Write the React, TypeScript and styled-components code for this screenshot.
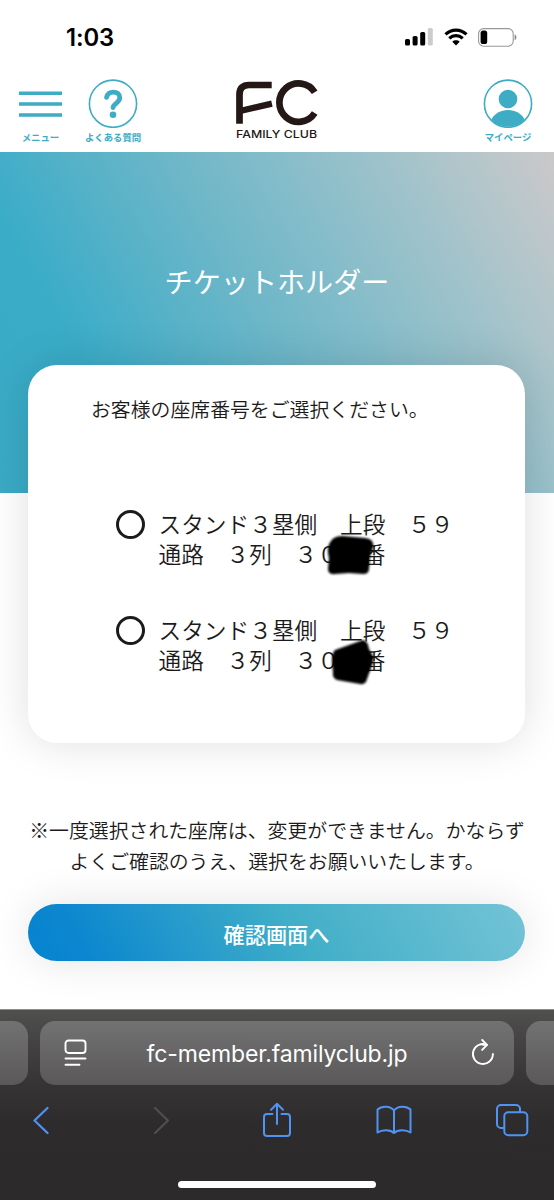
import React from "react";
import styled, { createGlobalStyle } from "styled-components";

const GlobalStyle = createGlobalStyle`
  *, *::before, *::after { box-sizing: border-box; }
  html, body { margin: 0; padding: 0; background: #fff; }
  body { font-family: "Noto Sans CJK JP", "Noto Sans", sans-serif; color: #1c1a1a; }
  button { font: inherit; border: 0; background: none; padding: 0; }
  svg { display: block; flex: none; }
`;

const Screen = styled.div`
  width: 554px;
  height: 1200px;
  overflow: hidden;
  display: flex;
  flex-direction: column;
  background: #fff;
`;

const StatusBar = styled.div`
  height: 74px;
  flex: none;
  display: flex;
  justify-content: space-between;
  align-items: center;
  padding: 0 37px 0 66px;
`;

const Clock = styled.span`
  padding-top: 1px;
  font: 600 23.8px/28px Inter, sans-serif;
  letter-spacing: -0.1px;
  color: #000;
`;

const StatusIcons = styled.div`
  display: flex;
  align-items: center;
  gap: 10.5px;
`;

const Header = styled.header`
  height: 78px;
  flex: none;
  display: grid;
  grid-template-columns: 1fr auto 1fr;
  align-items: start;
  padding: 4px 21px 0 19px;
`;

const NavGroup = styled.nav<{ $end?: boolean }>`
  display: flex;
  gap: 23px;
  justify-content: ${(p) => (p.$end ? "flex-end" : "flex-start")};
`;

const NavItem = styled.button<{ $width: number }>`
  width: ${(p) => p.$width}px;
  display: flex;
  flex-direction: column;
  align-items: center;
  gap: 3px;
  color: #3eacc4;
`;

const NavLabel = styled.span`
  font-size: 9.4px;
  line-height: 12px;
  font-weight: 700;
  white-space: nowrap;
`;

const Hero = styled.section`
  height: 341px;
  flex: none;
  display: flex;
  justify-content: center;
  padding-top: 107px;
  background: linear-gradient(60deg, #3aaac6 0%, #3aacc8 21%, #67b5c8 45%, #8fbfca 68%, #b4c6cb 88%, #cbc8c9 100%);
`;

const HeroTitle = styled.h1`
  margin: 0;
  font-size: 28.1px;
  line-height: 44px;
  font-weight: 400;
  color: #fff;
`;

const Card = styled.section`
  position: relative;
  width: 497px;
  height: 378px;
  flex: none;
  margin: -128px 0 0 28px;
  padding: 28px 62px 0 63px;
  border-radius: 29px;
  background: #fff;
  box-shadow: 0 0 44px rgba(0, 0, 0, 0.13);
`;

const Prompt = styled.p`
  margin: 0 0 69px;
  font-size: 19.88px;
  line-height: 31px;
  font-weight: 350;
  white-space: nowrap;
`;

const Option = styled.label`
  display: flex;
  gap: 14px;
  height: 76px;
  margin: 0 0 29.5px 24.5px;
  padding-top: 15.5px;
`;

const Radio = styled.span`
  width: 29px;
  height: 29px;
  margin-top: 1.5px;
  flex: none;
  border: 3px solid #1c1a1a;
  border-radius: 50%;
`;

const SeatText = styled.span`
  position: relative;
  padding-top: 0.5px;
  font-size: 22.7px;
  line-height: 30px;
  font-weight: 350;
  white-space: nowrap;
`;

const Scribble = styled.svg`
  position: absolute;
  left: 166px;
  top: 25px;
`;

const Notice = styled.p`
  flex: none;
  margin: 71px 0 0;
  font-size: 19.88px;
  line-height: 31px;
  font-weight: 350;
  text-align: center;
  white-space: nowrap;
`;

const Submit = styled.button`
  flex: none;
  width: 497px;
  height: 57px;
  margin: 28px 0 0 28px;
  padding-top: 2px;
  border-radius: 29px;
  font-size: 21.2px;
  line-height: 30px;
  font-weight: 500;
  color: #fff;
  background: linear-gradient(60deg, #0683d0 0%, #0c87cf 12%, #41afc8 54%, #74c3d6 100%);
  box-shadow: 0 0 44px rgba(0, 0, 0, 0.11);
`;

const Browser = styled.footer`
  position: relative;
  flex: none;
  height: 191px;
  margin-top: auto;
  border-top: 1px solid #8b8c8c;
  background: linear-gradient(#50504f 0, #434141 35px, #353334 76px, #2d2b2c 115px, #2c2a2b 100%);
`;

const TabStrip = styled.div`
  display: flex;
  gap: 12px;
  padding-top: 11px;
  height: 75px;
`;

const Tab = styled.div<{ $edge?: "left" | "right" }>`
  width: ${(p) => (p.$edge ? "28px" : "474px")};
  flex: none;
  display: flex;
  align-items: center;
  justify-content: space-between;
  padding: ${(p) => (p.$edge ? "0" : "0 20px 0 24px")};
  border-radius: ${(p) => (p.$edge === "left" ? "0 15px 15px 0" : p.$edge === "right" ? "15px 0 0 15px" : "15px")};
  background: linear-gradient(#737272, #5a5858);
  color: #fff;
`;

const Address = styled.span`
  margin-right: 4px;
  padding-top: 1px;
  font: 400 23px/30px Inter, sans-serif;
  letter-spacing: -0.15px;
`;

const Toolbar = styled.div`
  display: grid;
  grid-template-columns: repeat(5, 84px);
  column-gap: 33.4px;
  justify-items: center;
  align-items: center;
  height: 70px;
  color: #5093f2;
`;

const HomeIndicator = styled.div`
  width: 198px;
  height: 7px;
  margin: 26px auto 0;
  border-radius: 4px;
  background: #fff;
`;

const SignalIcon = () => (
  <svg width="28" height="18" viewBox="0 0 28 18">
    <rect x="0" y="11" width="5" height="6.5" rx="1.6" />
    <rect x="7.6" y="8" width="5" height="9.5" rx="1.6" />
    <rect x="15.2" y="4" width="5" height="13.5" rx="1.6" />
    <rect x="22.8" y="0" width="5" height="17.5" rx="1.6" fill="#ccc" />
  </svg>
);

const WifiIcon = () => (
  <svg width="24" height="18" viewBox="0 0 24 18" fill="none" stroke="#000" strokeWidth="3.2">
    <path d="M1.5 6.4C7.4.7 16.6.7 22.5 6.4" />
    <path d="M5.3 10.4c3.8-3.6 9.6-3.6 13.4 0" />
    <path d="M8.3 13.7c2-1.9 5.4-1.9 7.4 0L12 17.4Z" fill="#000" stroke="none" />
  </svg>
);

const BatteryIcon = () => (
  <svg width="39" height="19" viewBox="0 0 39 19">
    <rect x=".6" y=".6" width="34.6" height="17.6" rx="5" fill="none" stroke="#999" strokeWidth="1.1" />
    <rect x="2.6" y="2.6" width="6.6" height="13.4" rx="2.6" />
    <path d="M36.6 6.6c2.4.8 2.4 4.8 0 5.6Z" fill="#888" />
  </svg>
);

const MenuIcon = () => (
  <svg width="43" height="50" viewBox="0 0 43 50" stroke="currentColor" strokeWidth="3.6">
    <path d="M0 15.2h43M0 26h43M0 37h43" />
  </svg>
);

const FaqIcon = () => (
  <svg width="50" height="50" viewBox="0 0 50 50" fill="none" stroke="currentColor">
    <circle cx="25" cy="25.7" r="23.6" strokeWidth="1.6" />
    <path d="M18.600 19.300c.800-3.400 3.400-5.200 6.700-5.200 4 0 6.500 2.100 6.500 5.500 0 2.900-1.500 4.100-3.600 5.700-2.100 1.600-3.100 2.600-3.200 4.400" strokeWidth="4.800" strokeLinecap="round" />
    <circle cx="25" cy="36.700" r="3.300" fill="currentColor" stroke="none" />
  </svg>
);

const ProfileIcon = () => (
  <svg width="50" height="50" viewBox="0 0 50 50">
    <circle cx="25" cy="25.7" r="23.6" fill="none" stroke="currentColor" strokeWidth="1.6" />
    <circle cx="25" cy="21" r="9.3" fill="currentColor" />
    <path d="M8.2 41.8C11.5 35.4 17.6 32 25 32s13.500 3.400 16.800 9.800A23.700 23.700 0 0 1 8.200 41.800Z" fill="currentColor" />
  </svg>
);

const Logo = () => (
  <svg width="84" height="62" viewBox="0 0 84 62" fill="none" stroke="#231815">
    <path d="M5.500 45.800V16.500Q5.500 7 15 7H37.700" strokeWidth="6.700" />
    <path d="M6 33L37.900 25.600" strokeWidth="6.400" />
    <path d="M80.700 14.200A19.200 19.200 0 1 0 80.700 35" strokeWidth="6.700" />
    <text x="2" y="60" textLength="81" lengthAdjust="spacingAndGlyphs" fill="#231815" stroke="none" fontFamily="Inter, sans-serif" fontSize="10.400" fontWeight="500">
      FAMILY CLUB
    </text>
  </svg>
);

const PageIcon = () => (
  <svg width="23" height="28" viewBox="0 0 23 28" fill="none" stroke="currentColor" strokeWidth="1.900" strokeLinecap="round">
    <rect x="1.500" y="1.500" width="20" height="12.500" rx="3" />
    <path d="M1.500 19.500h20M1.500 25.700h14" />
  </svg>
);

const ReloadIcon = () => (
  <svg width="23" height="28" viewBox="0 0 23 28" fill="none" stroke="currentColor" strokeWidth="1.900" strokeLinecap="round" strokeLinejoin="round">
    <path d="M21.900 15A10 10 0 1 1 15.800 5.800H12" />
    <path d="M11.200 1l4.800 4.900-4.800 5" />
  </svg>
);

const BackIcon = () => (
  <svg width="18" height="28" viewBox="0 0 18 28" fill="none" stroke="currentColor" strokeWidth="2.200" strokeLinecap="round" strokeLinejoin="round">
    <path d="M14.500 2L1.500 14.500l13 12.500" />
  </svg>
);

const ForwardIcon = () => (
  <svg width="22" height="28" viewBox="0 0 22 28" fill="none" stroke="#504e4f" strokeWidth="2.200" strokeLinecap="round" strokeLinejoin="round">
    <path d="M7 2l13 12.500L7 27" />
  </svg>
);

const ShareIcon = () => (
  <svg width="30" height="36" viewBox="0 0 30 36" fill="none" stroke="currentColor" strokeWidth="2" strokeLinecap="round" strokeLinejoin="round">
    <path d="M10.500 12H5a3 3 0 0 0-3 3v16a3 3 0 0 0 3 3h20a3 3 0 0 0 3-3V15a3 3 0 0 0-3-3h-5.500" />
    <path d="M15 22V2M9 7.700l6-6 6 6" />
  </svg>
);

const BookIcon = () => (
  <svg width="36" height="32" viewBox="0 0 36 32" fill="none" stroke="currentColor" strokeWidth="2" strokeLinejoin="round">
    <path d="M18 6.500C14.500 1.600 5.500 1.600 1.500 5.500V28.500c4.500-3.200 13-3.200 16.500.500V6.500ZM18 6.500c3.500-4.900 12.500-4.900 16.500-1V28.500c-4.500-3.200-13-3.200-16.500.500Z" />
  </svg>
);

const TabsIcon = () => (
  <svg width="34" height="34" viewBox="0 0 34 34" fill="none" stroke="currentColor" strokeWidth="2">
    <path d="M9 25H6a4 4 0 0 1-4-4V6a4 4 0 0 1 4-4h15a4 4 0 0 1 4 4v3" />
    <rect x="9.300" y="9.300" width="23" height="23" rx="4" />
  </svg>
);

const seats = [
  "M6 7Q9 2 18 2L40 4Q50 5 48 14L45 22L44 35Q44 40 38 40L24 39L10 40Q3 41 3 35L4 24Q1 13 6 7Z",
  "M10 11L38 1Q43 2 44 10L48 17Q49 22 46 29L42 40Q41 46 35 45L12 41Q7 39 8 33L7 22Q7 14 10 11Z",
];

export default function App() {
  return (
    <Screen>
      <GlobalStyle />
      <StatusBar>
        <Clock>1:03</Clock>
        <StatusIcons>
          <SignalIcon />
          <WifiIcon />
          <BatteryIcon />
        </StatusIcons>
      </StatusBar>
      <Header>
        <NavGroup>
          <NavItem $width={43}>
            <MenuIcon />
            <NavLabel>メニュー</NavLabel>
          </NavItem>
          <NavItem $width={56}>
            <FaqIcon />
            <NavLabel>よくある質問</NavLabel>
          </NavItem>
        </NavGroup>
        <Logo />
        <NavGroup $end>
          <NavItem $width={50}>
            <ProfileIcon />
            <NavLabel>マイページ</NavLabel>
          </NavItem>
        </NavGroup>
      </Header>
      <Hero>
        <HeroTitle>チケットホルダー</HeroTitle>
      </Hero>
      <Card>
        <Prompt>お客様の座席番号をご選択ください。</Prompt>
        {seats.map((shape) => (
          <Option key={shape}>
            <Radio />
            <SeatText>
              スタンド３塁側　上段　５９
              <br />
              通路　３列　３０　番
              <Scribble width="52" height="50" viewBox="0 0 52 50">
                <path d={shape} style={{ filter: "blur(1.3px)" }} />
              </Scribble>
            </SeatText>
          </Option>
        ))}
      </Card>
      <Notice>
        ※一度選択された座席は、変更ができません。かならず
        <br />
        よくご確認のうえ、選択をお願いいたします。
      </Notice>
      <Submit>確認画面へ</Submit>
      <Browser>
        <TabStrip>
          <Tab $edge="left" />
          <Tab>
            <PageIcon />
            <Address>fc-member.familyclub.jp</Address>
            <ReloadIcon />
          </Tab>
          <Tab $edge="right" />
        </TabStrip>
        <Toolbar>
          <BackIcon />
          <ForwardIcon />
          <ShareIcon />
          <BookIcon />
          <TabsIcon />
        </Toolbar>
        <HomeIndicator />
      </Browser>
    </Screen>
  );
}
